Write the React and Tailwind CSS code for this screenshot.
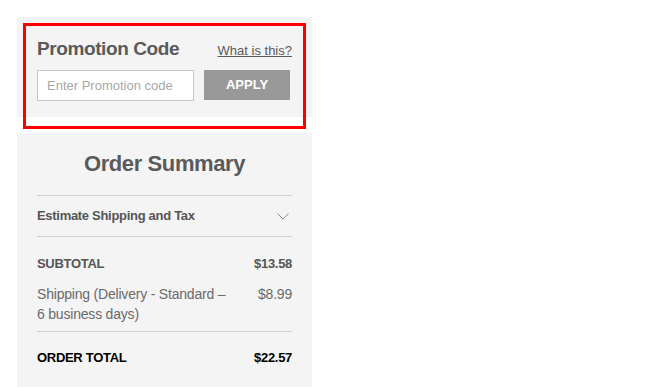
import React, { useState } from "react";

const font = { fontFamily: '"Liberation Sans", Arial, sans-serif' };

const Chevron = () => (
  <svg width="12" height="7" viewBox="0 0 12 7" fill="none">
    <path d="M0.5 0.5 L6 6 L11.5 0.5" stroke="#8a8a8a" strokeWidth="1" />
  </svg>
);

const App = () => {
  const [code, setCode] = useState("");

  return (
    <div className="min-h-[387px] bg-white pl-[17px] pt-[17px]" style={font}>
      <div className="w-[295px]">
        {/* promotion code box */}
        <div className="relative h-[100px] bg-[#f4f4f4] px-5 pt-[20px]">
          <div className="flex items-baseline justify-between">
            <h3 className="text-[19px] font-bold leading-6 tracking-[-0.4px] text-[#5a5a5a]">
              Promotion Code
            </h3>
            <a href="#" className="text-[13px] text-[#5a5a5a] underline">
              What is this?
            </a>
          </div>
          <div className="mt-[9px] flex gap-[10px]">
            <input
              type="text"
              value={code}
              onChange={(e) => setCode(e.target.value)}
              placeholder="Enter Promotion code"
              className="h-[31px] w-[157px] border border-[#c8c8c8] bg-white px-[9px] text-[13px] text-[#555] placeholder:text-[#a8a8a8] focus:outline-none"
            />
            <button
              type="button"
              className="h-[30px] w-[86px] bg-[#999999] text-[13px] font-bold text-white"
            >
              APPLY
            </button>
          </div>
          <div className="pointer-events-none absolute left-[6px] top-[6px] h-[106px] w-[283px] border-[3px] border-[#ff0000]" />
        </div>

        {/* order summary */}
        <div className="mt-4 bg-[#f4f4f4] px-5 pt-[16px] pb-6">
          <h2 className="text-center text-[22px] font-bold leading-[30px] tracking-[-0.4px] text-[#5a5a5a]">
            Order Summary
          </h2>
          <div className="mt-[16px] border-t border-[#cfcfcf]" />
          <button
            type="button"
            className="flex h-10 w-full items-center justify-between pr-[3px]"
          >
            <span className="text-[13px] font-bold tracking-[-0.3px] text-[#555]">
              Estimate Shipping and Tax
            </span>
            <Chevron />
          </button>
          <div className="border-t border-[#cfcfcf]" />
          <div className="pt-[17px] pb-[7px] text-[13px]">
            <div className="flex justify-between font-bold tracking-[-0.3px] text-[#555]">
              <span>SUBTOTAL</span>
              <span>$13.58</span>
            </div>
            <div className="mt-[10px] flex justify-between text-[14px] leading-5 tracking-[-0.2px] text-[#6a6a6a]">
              <span className="w-[192px]">
                Shipping (Delivery - Standard – 6 business days)
              </span>
              <span>$8.99</span>
            </div>
          </div>
          <div className="border-t border-[#cfcfcf]" />
          <div className="flex justify-between pt-[16px] text-[13px] font-bold tracking-[-0.3px] text-black">
            <span>ORDER TOTAL</span>
            <span>$22.57</span>
          </div>
        </div>
      </div>
    </div>
  );
};

export default App;
